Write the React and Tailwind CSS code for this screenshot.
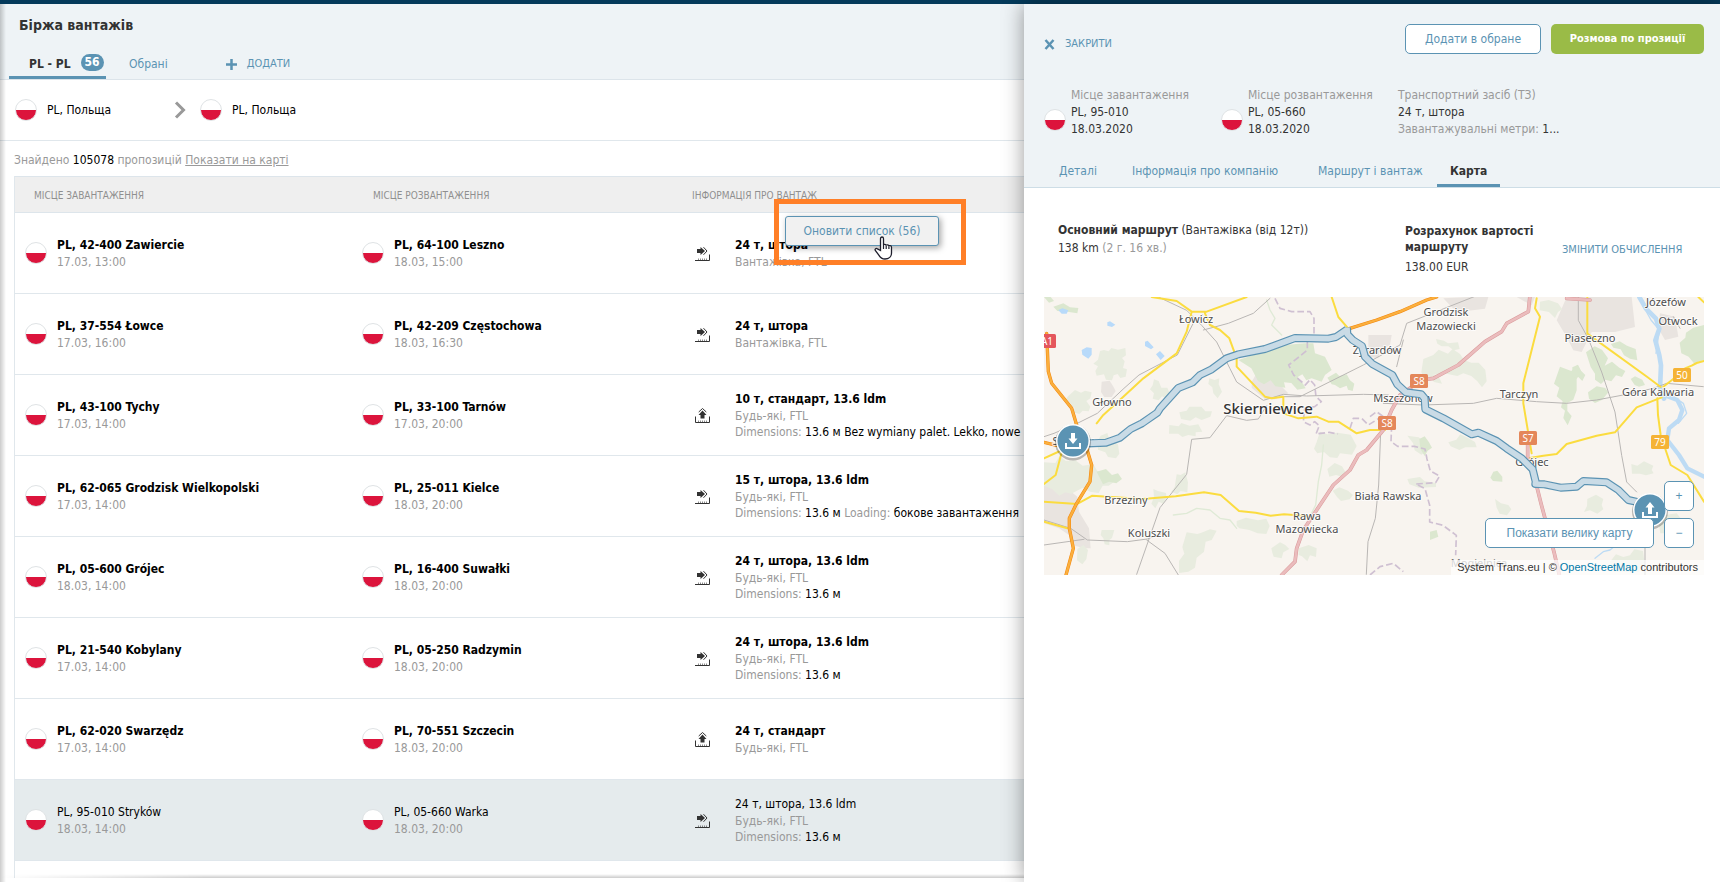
import React, { useState } from "react";
import clsx from "clsx";

const offers = [
  { id: 1, from: "PL, 42-400 Zawiercie", fromDate: "17.03, 13:00", to: "PL, 64-100 Leszno", toDate: "18.03, 15:00", load: "side", cargo: "24 т, штора", truck: "Вантажівка, FTL" },
  { id: 2, from: "PL, 37-554 Łowce", fromDate: "17.03, 16:00", to: "PL, 42-209 Częstochowa", toDate: "18.03, 16:30", load: "side", cargo: "24 т, штора", truck: "Вантажівка, FTL" },
  { id: 3, from: "PL, 43-100 Tychy", fromDate: "17.03, 14:00", to: "PL, 33-100 Tarnów", toDate: "17.03, 20:00", load: "top", cargo: "10 т, стандарт, 13.6 ldm", truck: "Будь-які, FTL", dimensions: "13.6 м", note: "Bez wymiany palet. Lekko, nowe k" },
  { id: 4, from: "PL, 62-065 Grodzisk Wielkopolski", fromDate: "17.03, 14:00", to: "PL, 25-011 Kielce", toDate: "18.03, 20:00", load: "side", cargo: "15 т, штора, 13.6 ldm", truck: "Будь-які, FTL", dimensions: "13.6 м", loading: "бокове завантаження" },
  { id: 5, from: "PL, 05-600 Grójec", fromDate: "18.03, 14:00", to: "PL, 16-400 Suwałki", toDate: "18.03, 20:00", load: "side", cargo: "24 т, штора, 13.6 ldm", truck: "Будь-які, FTL", dimensions: "13.6 м" },
  { id: 6, from: "PL, 21-540 Kobylany", fromDate: "17.03, 14:00", to: "PL, 05-250 Radzymin", toDate: "18.03, 20:00", load: "side", cargo: "24 т, штора, 13.6 ldm", truck: "Будь-які, FTL", dimensions: "13.6 м" },
  { id: 7, from: "PL, 62-020 Swarzędz", fromDate: "17.03, 14:00", to: "PL, 70-551 Szczecin", toDate: "18.03, 20:00", load: "top", cargo: "24 т, стандарт", truck: "Будь-які, FTL" },
  { id: 8, from: "PL, 95-010 Stryków", fromDate: "18.03, 14:00", to: "PL, 05-660 Warka", toDate: "18.03, 20:00", load: "side", cargo: "24 т, штора, 13.6 ldm", truck: "Будь-які, FTL", dimensions: "13.6 м" },
];

const towns = [
  ["Łowicz", 152, 26],
  ["Głowno", 68, 109],
  ["Stryków", 29, 148],
  ["Brzeziny", 82, 207],
  ["Koluszki", 105, 240],
  ["Rawa", 263, 223],
  ["Mazowiecka", 263, 236],
  ["Biała Rawska", 344, 203],
  ["Żyrardów", 333, 57],
  ["Mszczonów", 359, 105],
  ["Grodzisk", 402, 19],
  ["Mazowiecki", 402, 33],
  ["Józefów", 622, 9],
  ["Otwock", 634, 28],
  ["Piaseczno", 546, 45],
  ["Tarczyn", 475, 101],
  ["Góra Kalwaria", 614, 99],
  ["Grójec", 488, 169],
];

const shields = [
  ["A1", 3, 44, 18, "#e4565c"],
  ["S8", 375, 84, 18, "#e4875a"],
  ["S8", 343, 126, 18, "#e4875a"],
  ["S7", 484, 141, 18, "#e4875a"],
  ["50", 638, 78, 18, "#f5b335"],
  ["79", 616, 145, 18, "#f5b335"],
];

const woods = [
  "M210 198l12-3 14 4 8-10 20 5 22-5 2 22-12 8 8 10-5 20 12 4-4 22-16 4-8-12-12 4-5 15-18-2-6-16-22 4-4-14 8-14-14-8 14-12z",
  "M135 315l18 8 12-6 20 5-4 18-12 8 12 17-5 14-18-2-10 10-18-5 4-14-16-6 4-8-18-6 10-14z",
  "M372 283l14 5 8 20 18 0 8 20-8 14-16-8-10 12-18-5 4-16-12-12 8-12z",
  "M538 280l16 5 14-5-2 18 10 22-13 20-13-15-3-18-12-10z",
  "M448 382l22-5 8-12 36 0 12 14 20 0-5 16-26 10-18-8-16 10-28-5z",
  "M418 420l28 4 8-10 25 8 26-4 12 22-20 2 0 12-22-4-18 6-12-10-28 0z",
  "M42 532l34 2 12-20 20 14 28-2 22 16 32-4 12 20 26 6 28 24-20 14-18 0-12 22-26-4-22-12-34 18-18-4-18 10-22-20-24-10z",
  "M202 470l10-18 20-8 6 20 26 14 4 28-10 14-24-4-8-14-22-8z",
  "M440 568l12 2 14-8 8 30-2 30-20-4-10 10-18-8 10-14z",
  "M370 612l14 6 24 6 2 16-10 16-14-6-10 20-12-14 8-20z",
  "M620 708l28-10 36 8 25-5 10 22-10 24-26-2-25-10-30-5-8-8z",
  "M470 742l32 5 12-4 26-10 20 4-15 28-18 5-5 30-22 18-5 30-20 12-28 4 0-36 16-22-6-20z",
  "M215 735l38 0-7 24-8 6 0 16-14-3-4-18-8-10z",
  "M142 792l18-12 14 15-5 28-12 15-16-12z",
  "M724 790l26-18 16 8 12 12-18 10-5 18-24-5-4-12z",
  "M806 790l30-10 24 10-2 26-18-5-8 18-16-15-10-4z",
  "M870 440l22 8 30-5 40 6 18 34-14 26-36-4-8 14-22-2-18-16-20 4-10-14 8-20z",
  "M892 552l22-18 22 10 12 20-12 11-18-5-20 5z",
  "M908 617l20-10 26 10 15 13-10 13-26 5-12-12z",
  "M1180 222l30-12 16-16 28 12 14-14 22 15 12 18 22 8 22 0 20 22 4 34-14 18-14-18-18-16-24-8-18 8-40-8-36 5-22 12-10-20z",
  "M1218 162l24 5 12 8 30-3 5 20-18 4-16-12-20 0-13-8z",
  "M1210 215l-6 50 24 13 8 18-24-5-20-23 4-42z",
  "M1255 472l24-8 12-16 22 10 22 13 5 16-34 0-18 8-26-11z",
  "M1132 452l34 5 18 13-5 18 8 13-13 8-20-13-5-22z",
  "M1132 582l38-6 14 13 34 5 0 12-52 2-28-10z",
  "M1395 642l18 13 22 5 9 13-13 18-22-5-9-18z",
  "M1672 642l26-13 22 13-5 18 5 13-18 13-22-10-18 5 9-18z",
  "M1804 537l18 5 20-13 28 13-5 13 6 10-23 6-18-5-24 0z",
  "M1884 702l26-13 30-4 18 22-9 34-24 4-34 0z",
  "M1740 830l18-22 22 8 20-5 13-18 26 5 5 36-18 26-78 0z",
  "M1530 50l26-5 28 10 13 18-13 8-9 18-18-18-28-5z",
];

const denseWoods = [
  "M70 65l30-10 20 12 25 2-3 16-30-5-30-2z",
  "M42 36l20 0 10 12-15 5z",
  "M625 225l30-10 50-20 60-15 60-5 25 0 5 30 30 10 20 40-20 15-10 20-30-10-16 6-12-18-14 8 16 20 8 14-25 4-18-20-22-2 4 16-30-4-14-18-20 12-18-10-20-38z",
  "M892 278l26-15 10 10 22-5 10 18 13 10-5 22-14-4-4-12-20 8-15-10-10-2z",
  "M1168 462l16-8 13 18 9 16-13 9-9 16-13-22z",
  "M1390 560l12-3 15 18 0 15-28-2-8-10z",
  "M1200 740l20-5 5 20-25 10z",
  "M1590 245l34 13 18-18 12 20-14 22 0 34-10 28-18 10 0 24 13 15-12 28-13-22 5-22-12-10 5-18-18-15 8-26-16-12z",
  "M1668 202l26-18 22 10 18 26-10 22 22-12 22 18 18 10-10 18-18-5-14 18-18-5-13 13-18-13 0-18-13-20z",
  "M1674 322l26-18 26 5 9 13-18 22-22 10-18-13z",
  "M1743 177l26-8 22 13 26 10 5 34-22-5-18-10-10-18-22-5z",
  "M1802 282l13-8 22 10 8 16-18 5-13-5z",
  "M1990 128l32-8 0 105-30 10-16-20-22-10-5-32 17-15 2-15z",
  "M1627 247l17-8 9 18 13 13-9 18-13-13-17 5z",
  "M200 560l28-8 18 18 18-5 12 17-17 13-22-5-18 8z",
];

const TOWNS_LIGHT = "M215 290l24-3 10 16 8 15-12 18-22 0-10-15zM42 580l30-20 20 15 25 40 25 20 5 45 30 50 5 60-20 0-35-10-10-30-30-20-45-15zM665 290l15-25 25 0 40 30 30 30-40 18-30 0-40-35zM1015 150l70 0-5 30-30 15-5 25-30-5zM1240 40l80-4 55 0-10 35-80 10-20-15zM1460 36l55 0-10 25zM1610 36l195 0 10 90-60 15-70 0-30 60-25-5-20-40-30-50zM1890 85l45 10 10 60-40 10-20-35z";

function Flag() {
  return (
    <span
      role="img"
      aria-label="Польща"
      className="block size-[22px] shrink-0 overflow-hidden rounded-full border border-[#dfe3e5] bg-linear-to-b from-white from-50% to-[#dc143c] to-50%"
    />
  );
}

function LoadIcon({ type }) {
  return (
    <svg width="15" height="15" viewBox="0 0 15 15" fill="none" stroke="#333">
      <path d={type === "top" ? "M.5 8.500v6h14v-6" : "M0 14.500h14.500v-6"} />
      <path d="M3.500 14v-1.500M5.500 14v-1.500M7.500 14v-1.500M9.500 14v-1.500M11.500 14v-1.500" strokeWidth=".8" opacity=".7" />
      <g transform={type === "top" ? "translate(2.500 12.500) rotate(-90)" : "translate(0 0)"}>
        <path d="M2 3h3.500V1L10 5 5.500 9V7H2z" fill="#333" stroke="none" />
        <path d="M8.500 1.200L12 5 8.500 8.800" />
      </g>
    </svg>
  );
}

function Place({ title, date, bold }) {
  return (
    <div className="flex items-center gap-2.5">
      <Flag />
      <div className="leading-4 whitespace-nowrap">
        <p className={clsx("leading-[17px] text-black", bold && "font-bold")}>{title}</p>
        <p className="text-[#999]">{date}</p>
      </div>
    </div>
  );
}

function OffersTable({ selected, onSelect }) {
  return (
    <table className="w-full table-fixed border-separate border-spacing-0 border-l border-[#e0e7ec]">
      <colgroup>
        <col className="w-[337px]" />
        <col className="w-[322px]" />
        <col />
      </colgroup>
      <thead className="bg-[#efefef] text-left text-[10px] text-[#8f8f8f] uppercase">
        <tr className="h-[37px]">
          <th className="border-y border-[#dde5eb] pt-0.5 pl-[19px] font-normal">Місце завантаження</th>
          <th className="border-y border-[#dde5eb] pt-0.5 pl-[21px] font-normal">Місце розвантаження</th>
          <th className="border-y border-[#dde5eb] pt-0.5 pl-[18px] font-normal">Інформація про вантаж</th>
        </tr>
      </thead>
      <tbody>
        {offers.map((o) => {
          const active = o.id === selected;
          return (
            <tr key={o.id} onClick={() => onSelect(o.id)} className={clsx("h-[81px]", active && "bg-[#e5ebed]")}>
              <td className="border-b border-[#e0e7ec] pl-2.5">
                <Place title={o.from} date={o.fromDate} bold={!active} />
              </td>
              <td className="border-b border-[#e0e7ec] pl-2.5">
                <Place title={o.to} date={o.toDate} bold={!active} />
              </td>
              <td className="overflow-hidden border-b border-[#e0e7ec] pl-[21px]">
                <div className="flex items-center gap-[25px]">
                  <span className="shrink-0">
                    <LoadIcon type={o.load} />
                  </span>
                  <div className="leading-4 whitespace-nowrap text-[#999]">
                    <p className={clsx("leading-[17px] text-black", !active && "font-bold")}>{o.cargo}</p>
                    <p>{o.truck}</p>
                    {o.dimensions && (
                      <p>
                        Dimensions: <span className="text-black">{o.dimensions} {o.note}</span>
                        {o.loading && (
                          <>
                            Loading: <span className="text-black">{o.loading}</span>
                          </>
                        )}
                      </p>
                    )}
                  </div>
                </div>
              </td>
            </tr>
          );
        })}
      </tbody>
    </table>
  );
}

function RefreshHint() {
  return (
    <div className="absolute top-[195px] left-[774px] h-[66px] w-[192px] border-[5px] border-[#ff7f27] pt-3 pl-1.5">
      <button className="h-[30px] w-[154px] rounded-[3px] border border-[#5b93b3] bg-[#f1f1f1] text-[#5b93b3] shadow-[2px_2px_6px_rgba(0,0,0,0.35)]">
        Оновити список (56)
      </button>
      <svg className="absolute top-8 left-[95px]" width="19" height="24" viewBox="0 0 19 24">
        <path
          d="M6.500 14.500V2.800C6.500 1.600 7.200 1 8 1s1.500.6 1.500 1.800V9c0-1 2.600-1 2.700.6 0-1.100 2.600-1 2.700.5.1-.9 2.600-.8 2.600 1.100V17c0 3.500-2.500 6-6.500 6-3 0-4.700-1.500-6-3.700L1.300 14.500c-.8-1.500.8-2.700 2.200-1.600z"
          fill="#fff"
          stroke="#1d1d2b"
          strokeWidth="1.300"
        />
        <path d="M9.500 9v4M12.200 9.800V13M14.900 10.300V13" stroke="#1d1d2b" strokeWidth="1.200" />
      </svg>
    </div>
  );
}

function MapMarker({ x, y, up }) {
  return (
    <g transform={`translate(${x} ${y})`}>
      <circle cy="1.500" r="18" fill="#000" opacity=".25" />
      <circle r="17" fill="#fff" />
      <circle r="15.500" fill="#5b93b3" />
      <path d="M-7 2V7H7V2" fill="none" stroke="#fff" strokeWidth="2" />
      {up ? <path d="M-2 4V-2.500H-4.500L0-8 4.500-2.500H2V4z" fill="#fff" /> : <path d="M-2-8V-2.500H-4.500L0 3 4.500-2.500H2V-8z" fill="#fff" />}
    </g>
  );
}

function RouteMap() {
  const route =
    "M150 476L228 473 270 458 302 432 336 415 382 383 390 370 445 309 488 292 510 270 545 253 590 220 625 208 705 192 795 159 895 161 918 156 951 134M951 128L952 148 968 165 996 183 1005 215 1027 237 1087 270 1102 298 1128 322 1174 328 1184 340 1186 373 1240 400 1325 448 1345 443 1400 468 1430 490 1475 520 1508 553 1517 590 1516 597 1543 598 1592 608 1640 605 1660 588 1730 592 1765 615 1795 645 1840 655";
  return (
    <svg className="block h-full w-full bg-[#f8f4ef]" viewBox="0 0 660 278" preserveAspectRatio="xMidYMid slice">
      <g transform="translate(-14 -12) scale(0.33333)" fill="none" strokeLinejoin="round" strokeLinecap="round">
        <path d={TOWNS_LIGHT} fill="#e9e4e0" />
        {woods.map((d) => (
          <path key={d} d={d} fill="#e8ecdf" />
        ))}
        {denseWoods.map((d) => (
          <path key={d} d={d} fill="#dbe7cf" />
        ))}
        <path d="M85 75l12-5 18 6-5 10-15 0zM232 112l8-3 16 10-10 7-14-4zM155 195l15-8 15 2 0 20-10 12-18-12zM345 170l8-3 18 20-8 6-18-10zM378 208l12-10 14 15-12 12z" fill="#b8dafa" />

        {/* Vistula and its side channels */}
        <g stroke="#bddbf4">
          <path d="M1828 36l20 35 30 30 10 30-12 35 12 45 5 30-3 70 12 30" strokeWidth="14" />
          <path d="M1902 330l40 15 15 30-10 30-30 25-5 35 35 45 25 40 50 25" strokeWidth="13" />
          <path d="M1838 60l25 45 25 30-10 70M1915 325l45 30 10 30-25 30" strokeWidth="4" />
          <path d="M1695 820l25-20 20-5 10-8" strokeWidth="4" />
        </g>
        <g stroke="#dfead6" strokeWidth="4">
          <path d="M710 45l10 30 15 25-10 20 30 30M880 480l-5 60-10 50-8 70-20 40M430 690l40-5 30-15 40 5 30 25 30 5 20 25" />
        </g>

        {/* province borders */}
        <g stroke="#cfc0d2" strokeWidth="5" strokeDasharray="20 9" strokeLinecap="butt">
          <path d="M735 40l15 30 35 10 55 0 12 20 0 50M832 170l0 25-24 20-32 25 15 30 35 30 14-16 14 16 4 35 16 15-20 15-30 5-4 40 20 10 14-10 14 12-10 25 40-5 26 5M1020 395l20-15 20 15M960 430l10-30 25 0 20 20 40-25M1085 420l-2 50 20 14 50 0 32 8 6 30 10 36 28 15-12 20-60 4 28 14 14 50 0 50 40 10 40 30-2 60M1020 870l30-25 40-10 30 25" />
        </g>

        {/* railways */}
        <g stroke="#b9b6b4" strokeWidth="3">
          <path d="M385 36l85 40 45 45 45 50 40 80 20 40 80 55 60-18 70 5 170-5 75 2M720 40l-50 45-75 30-75 20M42 455l30-10 70-30 60-30 80-75 45-40 115-60 50-100 25-20M42 705l80 25 50 35 120 5 60-8 40-15M320 868l70-200 80-100 15-105 55-5 50-66 60 14 35-4 25-40M42 780l120-17M350 765l55 40 40 65M760 335l50 0 190-95 110-60 20-65 215-85M1060 355l120 5 150-5 70-15 120 10 90 5 90-10 80-15 90-20 40-15 110 10M1645 36l0 70 30 55 40 100 40 120 20 130 15 80 30 30M1052 440l-6 160-10 100-22 70-5 98M1845 870l0-160M1120 165l-20 80" />
          <path d="M1930 95l20 35" />
        </g>

        <g stroke="#fbdc3f" strokeWidth="6">
          <path d="M365 36l75 12 45 32 45 0 120-44M485 80l-15 60-30 65-100 75-60 55-60 55-20 25M525 85l15 35 30 15 28 25 22 60 0 25 85 90 20 5 35-5 0 50 45 15 55-5 35 15 30 0 55 35 40-10 45 0M905 36l20 60 30 35M42 650l100 7 45-25 150 10 100-8 85-12 50 8 55 48 50 5 45 9 40-4 70 5M42 710l70 20M42 520l55-25-20 75-35 27" />
          <path d="M1520 40l-5 30 15 25-50 200 0 60 25 150M1672 36l0 110 180 130 40 30M1495 520l45-8 40-5 30-30 90-25 55-10 65-75 75-30M1882 340l2 50 8 60 30 90 50 30 50 80M1900 305l45-35 20-20 20-8 15-8 22-6M2005 36l17 16" />
        </g>
        <g stroke="#f1860d" strokeWidth="10">
          <path d="M50 145l5 115 10 35 60 75 15 50M170 490l15 50-5 50-40 65-22 45 0 30 12 60-22 80M42 472l50 12M960 130l80-25 70-25 80-35 30-9" />
        </g>
        <g stroke="#fbaf3d" strokeWidth="7">
          <path d="M50 145l5 115 10 35 60 75 15 50M170 490l15 50-5 50-40 65-22 45 0 30 12 60-22 80M42 472l50 12M960 130l80-25 70-25 80-35 30-9" />
        </g>
        <g stroke="#d99a9b" strokeWidth="11">
          <path d="M755 870l40-40 5-40 20-55 40-60 50-75 50-45 25-45 25-15 50-60 25-60 25-45 65-45 35-5 75-40 80-70 50-30 15-25 65-35 5-49M1493 480l0 50 25 65 15 60 40 150 15 65M1610 40l70 5" />
        </g>
        <g stroke="#ebbcbd" strokeWidth="8">
          <path d="M755 870l40-40 5-40 20-55 40-60 50-75 50-45 25-45 25-15 50-60 25-60 25-45 65-45 35-5 75-40 80-70 50-30 15-25 65-35 5-49M1493 480l0 50 25 65 15 60 40 150 15 65M1610 40l70 5" />
        </g>
      </g>

      <g fontFamily="Noto Sans, sans-serif" textAnchor="middle" paintOrder="stroke" strokeLinejoin="round">
        {towns.map(([name, x, y]) => (
          <text key={name} x={x} y={y} fontSize="11" fill="#4d4d4d" stroke="#fff" strokeOpacity=".75" strokeWidth="2">
            {name}
          </text>
        ))}
        <text x="224" y="117" fontSize="15" fill="#333" stroke="#fff" strokeOpacity=".75" strokeWidth="2" fontWeight="500">
          Skierniewice
        </text>
        <text x="435" y="270" fontSize="11" fill="#777">
          Mogielnica
        </text>
        {shields.map(([name, x, y, w, color]) => (
          <g key={name + x}>
            <rect x={x - w / 2} y={y - 7} width={w} height="14" rx="1.500" fill={color} />
            <text x={x} y={y + 4} fontSize="10" fill="#fff">
              {name}
            </text>
          </g>
        ))}
      </g>

      <g transform="translate(-14 -12) scale(0.33333)" fill="none" strokeLinejoin="round">
        <path d={route} stroke="#5b93b3" strokeWidth="24" />
        <path d={route} stroke="#c9dbe6" strokeWidth="17" />
      </g>
      <MapMarker x={29} y={144} />
      <MapMarker x={606} y={213} up />
    </svg>
  );
}

const detailTabs = ["Деталі", "Інформація про компанію", "Маршрут і вантаж", "Карта"];

function OfferPanel() {
  const [tab, setTab] = useState("Карта");

  return (
    <aside className="relative w-[696px] shrink-0 bg-white text-[#333] shadow-[0_0_20px_rgba(0,0,0,0.4)]">
      <header className="border-b border-[#cddde6] bg-[#eef3f6] pt-5 pr-4 pl-5">
        <div className="flex h-[30px] items-start gap-2.5">
          <button className="mr-auto flex h-10 items-center gap-2.5 text-[11px] text-[#5b93b3]">
            <svg width="11" height="11" viewBox="0 0 11 11" stroke="#5b93b3" strokeWidth="2.500">
              <path d="M1.500 1l8 9M9.500 1l-8 9" />
            </svg>
            ЗАКРИТИ
          </button>
          <button className="h-[30px] w-[136px] rounded-[5px] border border-[#5b93b3] bg-white text-[#5b93b3]">Додати в обране</button>
          <button className="h-[30px] w-[153px] rounded-[5px] bg-[#9abb47] text-[11px] font-bold text-white">Розмова по прозиції</button>
        </div>

        <div className="mt-[33px] grid grid-cols-[177px_177px_1fr] leading-[17px]">
          <div className="flex gap-[5px]">
            <span className="mt-[22px]">
              <Flag />
            </span>
            <div>
              <p className="text-[#999]">Місце завантаження</p>
              <p>PL, 95-010</p>
              <p>18.03.2020</p>
            </div>
          </div>
          <div className="flex gap-[5px]">
            <span className="mt-[22px]">
              <Flag />
            </span>
            <div>
              <p className="text-[#999]">Місце розвантаження</p>
              <p>PL, 05-660</p>
              <p>18.03.2020</p>
            </div>
          </div>
          <div className="whitespace-nowrap">
            <p className="text-[#999]">Транспортний засіб (ТЗ)</p>
            <p>24 т, штора</p>
            <p className="text-[#999]">
              Завантажувальні метри: <span className="text-[#333]">1...</span>
            </p>
          </div>
        </div>

        <nav className="mt-4 grid h-[33px] grid-cols-[73px_186px_132px_63px] pl-0.5">
          {detailTabs.map((name) => (
            <button
              key={name}
              onClick={() => setTab(name)}
              className={clsx(
                "justify-self-start border-b-[3px] px-[13px] pt-1 whitespace-nowrap",
                tab === name ? "border-[#5b93b3] font-bold text-[#333]" : "border-transparent text-[#5b93b3]",
              )}
            >
              {name}
            </button>
          ))}
        </nav>
      </header>

      <section className="pt-[33px] pr-4 pl-5">
        <div className="flex pl-3.5 leading-[18px]">
          <div className="w-[347px]">
            <p>
              <b>Основний маршрут</b> (Вантажівка (від 12т))
            </p>
            <p>
              138 km <span className="text-[#999]">(2 г. 16 хв.)</span>
            </p>
          </div>
          <div className="w-[157px] pt-0.5">
            <p className="w-[140px] leading-4 font-bold">Розрахунок вартості маршруту</p>
            <p className="mt-[3px]">138.00 EUR</p>
          </div>
          <a href="#calc" className="mt-5 text-[11px] whitespace-nowrap text-[#5b93b3]">
            ЗМІНИТИ ОБЧИСЛЕННЯ
          </a>
        </div>

        <div className="relative mt-[21px] h-[278px] overflow-hidden">
          <RouteMap />
          <p className="absolute right-0 bottom-0 bg-white/70 px-1.5 font-['Liberation_Sans',sans-serif] text-[11px] leading-[15px]">
            System Trans.eu | ©{" "}
            <a href="#osm" className="text-[#0078a8]">
              OpenStreetMap
            </a>{" "}
            contributors
          </p>
          <div className="absolute right-2.5 bottom-[27px] flex items-end gap-2.5 font-['Liberation_Sans',sans-serif] text-[#5b93b3]">
            <button className="h-[30px] w-[169px] rounded-[5px] border border-[#5b93b3] bg-white">Показати велику карту</button>
            <div className="flex flex-col gap-[7px]">
              <button className="size-[30px] rounded-[5px] border border-[#5b93b3] bg-white">+</button>
              <button className="size-[30px] rounded-[5px] border border-[#5b93b3] bg-white">−</button>
            </div>
          </div>
        </div>
      </section>
    </aside>
  );
}

export default function App() {
  const [selected, setSelected] = useState(8);

  return (
    <div className="flex h-screen flex-col overflow-hidden bg-white font-['DejaVu_Sans_Condensed','DejaVu_Sans',sans-serif] text-[12px]">
      <div className="h-1 shrink-0 bg-[#043a5b]" />
      <div className="flex min-h-0 flex-1">
        <main className="relative min-w-0 flex-1 overflow-hidden">
          <header className="border-b border-[#dce4ea] bg-[#eef3f6] pt-[11px]">
            <h1 className="pl-[19px] text-[14px] leading-5 font-bold text-[#333]">Біржа вантажів</h1>
            <div className="mt-[9px] flex h-[35px] pl-[9px] text-[#5b93b3]">
              <button className="flex h-full w-[97px] items-center gap-2.5 border-b-[3px] border-[#5b93b3] pt-2 pl-5 font-bold whitespace-nowrap text-[#333]">
                PL - PL
                <span className="mb-1 rounded-full bg-[#5b93b3] px-1 leading-[17px] text-white">56</span>
              </button>
              <button className="ml-[23px] pt-[5px]">Обрані</button>
              <button className="ml-[58px] flex items-center gap-2.5 pt-[5px] text-[11px]">
                <svg width="11" height="11" viewBox="0 0 11 11" stroke="#5b93b3" strokeWidth="2.500">
                  <path d="M5.500 0v11M0 5.500h11" />
                </svg>
                ДОДАТИ
              </button>
            </div>
          </header>

          <div className="flex h-[61px] items-center border-b border-[#e0e7ec] pl-[15px] text-black">
            <div className="flex w-[159px] items-center gap-2.5">
              <Flag />
              PL, Польща
            </div>
            <svg width="12" height="18" viewBox="0 0 12 18" fill="none" stroke="#999" strokeWidth="3">
              <path d="M2 1.500L9.500 9 2 16.500" />
            </svg>
            <div className="ml-3.5 flex items-center gap-2.5">
              <Flag />
              PL, Польща
            </div>
          </div>

          <p className="pt-[11px] pb-2 pl-3.5 leading-4 text-[#999]">
            Знайдено <span className="text-black">105078</span> пропозицій{" "}
            <a href="#map" className="underline">
              Показати на карті
            </a>
          </p>

          <div className="pl-3.5">
            <OffersTable selected={selected} onSelect={setSelected} />
            <div className="h-[17px] border-l border-[#e0e7ec]" />
          </div>
          <div className="absolute bottom-1 left-0 h-1 w-full bg-linear-to-b from-transparent to-black/20 mask-linear-[to_right,transparent,black_20%]" />

          <RefreshHint />
          <div className="absolute inset-y-0 left-0 w-1.5 bg-linear-to-r from-black/20 to-transparent" />
        </main>

        <OfferPanel />
      </div>
    </div>
  );
}
